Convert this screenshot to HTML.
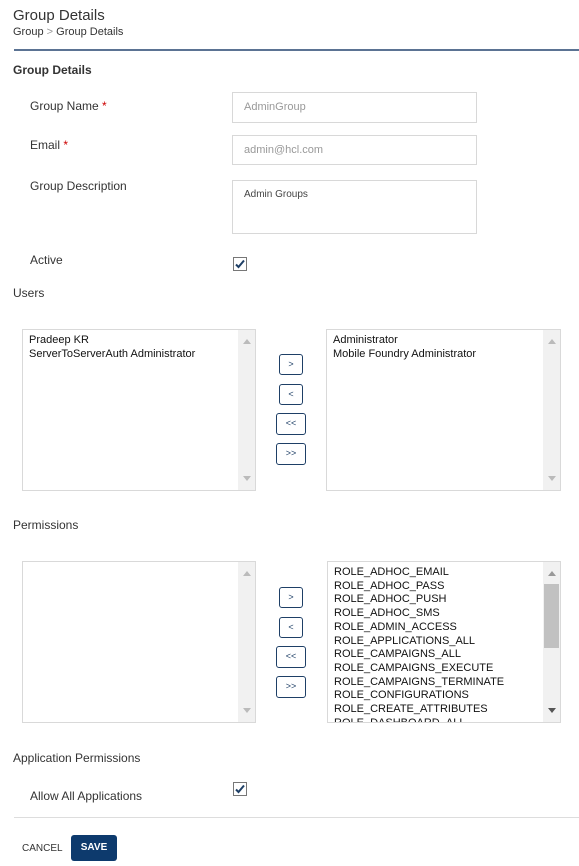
<!DOCTYPE html>
<html><head><style>
*{margin:0;padding:0;box-sizing:border-box}
body{width:579px;height:866px;background:#fff;font-family:"Liberation Sans",sans-serif;color:#333;position:relative;overflow:hidden}
.a{position:absolute;white-space:nowrap}
.lbl{font-size:12px;color:#333}
.inp{position:absolute;border:1px solid #d8d8d8;background:#fff;font-size:11px;color:#999;padding-left:11px}
.box{position:absolute;border:1px solid #d9d9d9;background:#fff;overflow:hidden}
.sb{position:absolute;right:0;top:0;bottom:0;width:17px;background:#f1f1f1}
.up,.dn{position:absolute;left:5px;width:0;height:0;border-left:4px solid transparent;border-right:4px solid transparent}
.up{top:9px;border-bottom:5px solid #bbb}
.dn{bottom:9px;border-top:5px solid #bbb}
.items{position:absolute;left:6px;top:4px;font-size:11px;line-height:13.7px;color:#111}
.btn{position:absolute;border:1px solid #1e3f66;border-radius:3px;background:#fff;font-size:9px;color:#1e3f66;text-align:center;line-height:19px}
.cb{position:absolute;width:14px;height:14px;border:1px solid #777;background:#fff}
</style></head><body>
<div class="a" style="left:13px;top:7px;font-size:15px;color:#333">Group Details</div>
<div class="a" style="left:13px;top:26px;font-size:11px;color:#333">Group <span style="color:#999">&gt;</span> Group Details</div>
<div class="a" style="left:14px;top:49px;width:565px;height:2px;background:#5b7393"></div>
<div class="a" style="left:13px;top:63px;font-size:12px;font-weight:bold;color:#333">Group Details</div>

<div class="a lbl" style="left:30px;top:99px">Group Name <span style="color:#c00">*</span></div>
<div class="inp" style="left:232px;top:92px;width:245px;height:31px;line-height:29px">AdminGroup</div>
<div class="a lbl" style="left:30px;top:138px">Email <span style="color:#c00">*</span></div>
<div class="inp" style="left:232px;top:135px;width:245px;height:30px;line-height:28px">admin@hcl.com</div>
<div class="a lbl" style="left:30px;top:179px">Group Description</div>
<div class="inp" style="left:232px;top:180px;width:245px;height:54px;padding-top:8px;font-size:10px;color:#444">Admin Groups</div>
<div class="a lbl" style="left:30px;top:253px">Active</div>
<div class="cb" style="left:233px;top:257px"><svg width="14" height="14" viewBox="0 0 14 14" style="position:absolute;left:-1px;top:-1px"><path d="M3 7.5l2.5 2.5L11 3.5" fill="none" stroke="#1e3f66" stroke-width="2"/></svg></div>

<div class="a" style="left:13px;top:286px;font-size:12px;color:#333">Users</div>
<div class="box" style="left:22px;top:329px;width:234px;height:162px"><div class="items">Pradeep KR<br>ServerToServerAuth Administrator</div><div class="sb"><div class="up"></div><div class="dn"></div></div></div>
<div class="box" style="left:326px;top:329px;width:235px;height:162px"><div class="items">Administrator<br>Mobile Foundry Administrator</div><div class="sb"><div class="up"></div><div class="dn"></div></div></div>
<div class="btn" style="left:279px;top:354px;width:24px;height:21px">&gt;</div>
<div class="btn" style="left:279px;top:384px;width:24px;height:21px">&lt;</div>
<div class="btn" style="left:276px;top:413px;width:30px;height:22px">&lt;&lt;</div>
<div class="btn" style="left:276px;top:443px;width:30px;height:22px">&gt;&gt;</div>

<div class="a" style="left:13px;top:518px;font-size:12px;color:#333">Permissions</div>
<div class="box" style="left:22px;top:561px;width:234px;height:162px"><div class="sb"><div class="up"></div><div class="dn"></div></div></div>
<div class="box" style="left:327px;top:561px;width:234px;height:162px"><div class="items" style="top:4px">ROLE_ADHOC_EMAIL<br>ROLE_ADHOC_PASS<br>ROLE_ADHOC_PUSH<br>ROLE_ADHOC_SMS<br>ROLE_ADMIN_ACCESS<br>ROLE_APPLICATIONS_ALL<br>ROLE_CAMPAIGNS_ALL<br>ROLE_CAMPAIGNS_EXECUTE<br>ROLE_CAMPAIGNS_TERMINATE<br>ROLE_CONFIGURATIONS<br>ROLE_CREATE_ATTRIBUTES<br>ROLE_DASHBOARD_ALL</div><div class="sb" style="background:#f1f1f1"><div class="up" style="border-bottom-color:#999"></div><div style="position:absolute;left:1px;top:22px;width:15px;height:64px;background:#c1c1c1"></div><div class="dn" style="border-top-color:#555"></div></div></div>
<div class="btn" style="left:279px;top:587px;width:24px;height:21px">&gt;</div>
<div class="btn" style="left:279px;top:617px;width:24px;height:21px">&lt;</div>
<div class="btn" style="left:276px;top:646px;width:30px;height:22px">&lt;&lt;</div>
<div class="btn" style="left:276px;top:676px;width:30px;height:22px">&gt;&gt;</div>

<div class="a" style="left:13px;top:751px;font-size:12px;color:#333">Application Permissions</div>
<div class="a lbl" style="left:30px;top:789px">Allow All Applications</div>
<div class="cb" style="left:233px;top:782px"><svg width="14" height="14" viewBox="0 0 14 14" style="position:absolute;left:-1px;top:-1px"><path d="M3 7.5l2.5 2.5L11 3.5" fill="none" stroke="#1e3f66" stroke-width="2"/></svg></div>
<div class="a" style="left:14px;top:817px;width:565px;height:1px;background:#ddd"></div>
<div class="a" style="left:22px;top:843px;font-size:10px;color:#333">CANCEL</div>
<div class="a" style="left:71px;top:835px;width:46px;height:26px;background:#0d3a6d;border-radius:3px;color:#fff;font-size:10px;font-weight:bold;text-align:center;line-height:26px">SAVE</div>
</body></html>
